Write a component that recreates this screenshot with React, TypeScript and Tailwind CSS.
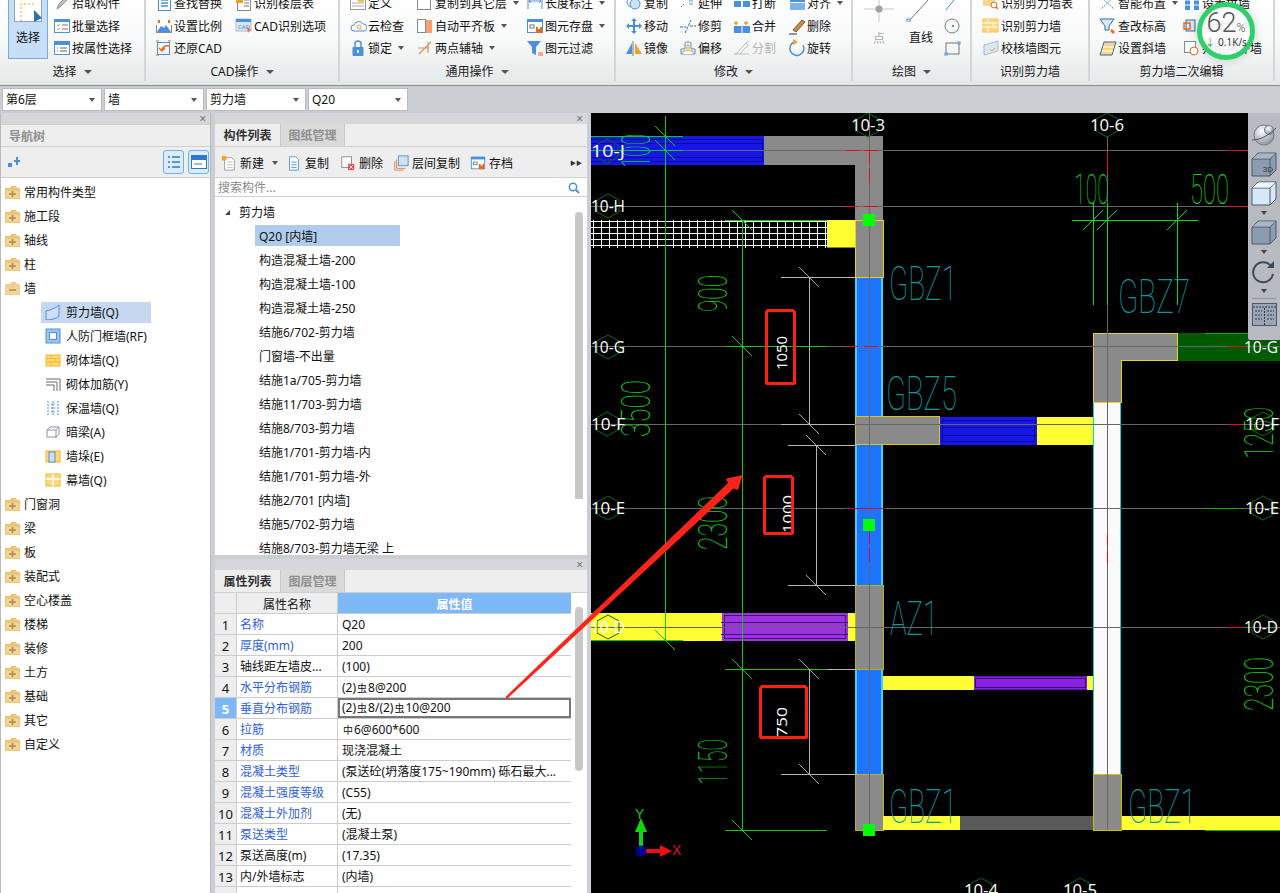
import type { ReactNode } from 'react';

const B = '#4a90dc';
const O = '#f0a030';

const icons: Record<string, ReactNode> = {
  pick: <path d="M4 15l2-5 7-7 2 2-7 7z" fill="#c9c4b8" stroke="#8a8a8a" />,
  batch: <><rect x="1.5" y="2.5" width="15" height="13" fill="#fff" stroke={B} /><rect x="1" y="2" width="16" height="3" fill={B} /><path d="M4 8l1 1 2-2M4 12l1 1 2-2" stroke={O} fill="none" /><path d="M9 8h6M9 12h6" stroke="#777" /></>,
  attr: <><rect x="1.5" y="2.5" width="15" height="13" fill="#fff" stroke={B} /><rect x="1" y="2" width="16" height="4" fill={B} /><path d="M4 9h1M4 12h1M7 9h7M7 12h7" stroke="#666" /></>,
  find: <><rect x="3.5" y="1.5" width="12" height="15" fill="#fff" stroke={B} /><path d="M6 6h7M6 9h7M6 12h7" stroke={B} strokeWidth="1.5" /></>,
  floors: <><rect x="2.5" y="1.5" width="13" height="15" fill="#fff" stroke="#888" /><rect x="1" y="1" width="7" height="8" fill={O} /><path d="M9 6h5M9 9h5M9 12h5" stroke="#777" /></>,
  scale: <><path d="M2 15l4-6 3 2 2-3 5 7z" fill={B} /><path d="M2 15.5h14M1.5 8v8M16.5 8v8" stroke="#888" /><path d="M4 3v3M14 3v3" stroke="#e86a20" strokeWidth="2" /></>,
  cad: <><rect x="1" y="2" width="15" height="12" fill="#dbe6f4" stroke="#a8bcd4" /><rect x="1" y="2" width="15" height="3" fill={B} /><text x="3" y="12" fontSize="6" fill="#5a7fb0">CAD</text><path d="M12 10l4 3-2 1-1 2z" fill="#e86a20" /></>,
  restore: <><rect x="2.5" y="3.5" width="12" height="12" fill="none" stroke={B} /><path d="M14 7c-4-1-7 1-7 5M4 9l3 3 3-3" fill="none" stroke="#e86a20" strokeWidth="1.5" /><path d="M1 2h3M1 16h3M13 2h3" stroke="#e86a20" /></>,
  define: <><rect x="1.5" y="2.5" width="15" height="13" fill="#fff" stroke="#999" /><path d="M9 5h6v3H9z" fill="#f5c050" /><path d="M3 9h12M3 12h12" stroke="#aaa" /></>,
  cloud: <><path d="M5 14a3 3 0 010-6 5 5 0 019-1 3.500 3.500 0 011 7z" fill="#fff" stroke={B} /><circle cx="10" cy="10" r="2" fill="none" stroke={O} /><path d="M11.500 11.500l2 2" stroke={O} /></>,
  lock: <><rect x="3.500" y="8" width="11" height="9" rx="1" fill={B} /><path d="M6 8V5a3 3 0 016 0v3" fill="none" stroke={B} strokeWidth="1.500" /><rect x="8" y="11" width="2" height="3" fill="#fff" /></>,
  copyLayer: <><rect x="1.500" y="2.500" width="13" height="13" fill="#fff" stroke="#888" /><path d="M2 5h12" stroke={B} strokeWidth="2" /></>,
  level: <><rect x="1.500" y="2.500" width="8" height="13" fill="#fff" stroke="#888" /><rect x="10" y="3" width="6" height="13" fill="#f5a070" /></>,
  twoPoint: <><path d="M3 15L15 3M2 9h11M12 3v11" stroke="#d8945a" strokeWidth="1.200" fill="none" /></>,
  dim: <><path d="M2 3v12M16 3v12M3 7h12M3 7l2-2M3 7l2 2M15 7l-2-2M15 7l-2 2" stroke={B} fill="none" /></>,
  store: <><rect x="1.500" y="2.500" width="15" height="13" fill="#fff" stroke={B} /><rect x="1" y="2" width="16" height="3" fill={B} /><rect x="4" y="8" width="4" height="3" fill="none" stroke="#777" /><rect x="10" y="10" width="6" height="6" fill="#e86a20" /><rect x="12" y="10" width="2" height="2" fill="#fff" /></>,
  filter: <><path d="M1 2h14l-5 6v8l-4-2V8z" fill={B} /><path d="M12 14h5M12 16h5" stroke="#e86a20" /></>,
  copyRound: <><circle cx="7" cy="8" r="5" fill="none" stroke={B} /><circle cx="10" cy="10" r="5" fill="#cfe2f6" stroke={B} /></>,
  extend: <path d="M2 5h9M11 3v8M13 3v8M2 13l3-3" stroke={B} strokeDasharray="2 1" fill="none" />,
  cut: <><rect x="1" y="7" width="7" height="6" fill={B} /><rect x="10" y="7" width="7" height="6" fill={B} /></>,
  align: <><rect x="2" y="4" width="15" height="4" fill={B} /><rect x="2" y="9" width="15" height="7" fill="#7fb2e8" /></>,
  move: <path d="M9 1l3 3H10v4h4V6l3 3-3 3v-2h-4v4h2l-3 3-3-3h2v-4H4v2L1 9l3-3v2h4V4H6z" fill={B} />,
  trim: <path d="M1 10h6M11 9h6M6 16L12 3" stroke="#2a6ab0" strokeDasharray="3 1" fill="none" />,
  merge: <><rect x="1" y="9" width="16" height="7" fill={B} /><path d="M9 9v7" stroke="#fff" /><path d="M3 4v4M1 6h4M13 4v4M11 6h4" stroke={O} strokeWidth="1.500" /></>,
  erase: <><path d="M5 13l9-10 3 2-9 10z" fill="#c98a4a" stroke="#7a5a30" /><path d="M1 17h8" stroke="#333" /></>,
  mirror: <><path d="M8 2v15" stroke="#777" /><path d="M7 4v11H1z" fill={B} /><path d="M10 4v11h7z" fill={O} /></>,
  offset: <><path d="M2 15V10h4V5a2 2 0 012-2h2a2 2 0 012 2v5h4v5z" fill="none" stroke={B} /><path d="M4 15v-3h4V6h2v6h4v3" fill="#fff" stroke={O} /></>,
  split: <><path d="M1 15h15M3 15L13 4l2 2-8 9M13 4l3-2" fill="none" stroke="#bbb" /></>,
  rotate: <><path d="M6 3a7 7 0 109 3" fill="none" stroke={B} strokeWidth="1.500" /><path d="M5 0l5 3-5 3z" fill={O} /></>,
  wallTable: <><rect x="1" y="2" width="12" height="10" fill="#f6d78e" /><circle cx="12" cy="11" r="3" fill="#fff" stroke="#e86a20" /><path d="M14 13l2 2" stroke="#e86a20" strokeWidth="1.500" /></>,
  brick: <><rect x="1" y="2" width="15" height="13" fill="#fbd67f" stroke="#f5c050" /><path d="M1 6h15M1 10h15M6 2v4M11 6v4M6 10v5" stroke="#fff" /></>,
  wallCheck: <><path d="M2 6l14-4v10L2 16z" fill="#dbe6f4" stroke="#a8bcd4" /><path d="M8 10l2 2 3-3" stroke={O} fill="none" /></>,
  smart: <path d="M2 3l13 12M15 3L2 15M5 1v5M13 1v5" stroke={B} strokeDasharray="2 1" fill="none" />,
  pillar: <><rect x="2" y="2" width="5" height="14" fill={B} /><rect x="11" y="2" width="5" height="14" fill={B} /><path d="M2 6h5M11 6h5M2 11h5M11 11h5" stroke="#fff" /></>,
  level2: <><path d="M1 2h14l-5 7v4H6V9z" fill="#dbe6f4" stroke="#2a6ab0" /><path d="M12 13l3 3" stroke="#e86a20" strokeWidth="2.500" /></>,
  slant: <><path d="M5 3h12l-4 13H1z" fill="#fbd67f" stroke="#2a6ab0" /><path d="M4 8h11M3 12h11" stroke="#fff" /></>,
  pull: <><rect x="3" y="3" width="9" height="11" fill="#dbe6f4" stroke="#2a6ab0" /><rect x="1" y="6" width="6" height="6" fill="none" stroke="#e86a20" strokeWidth="1.500" /></>,
  judge: <><rect x="1.500" y="2.500" width="11" height="11" fill="#fff" stroke="#7a90aa" /><circle cx="11" cy="12" r="4" fill="#fff" stroke="#e86a20" /></>,
  arc: <><path d="M3 16L14 2" stroke={B} /><rect x="13" y="1" width="3" height="3" fill="#fff" stroke={B} /></>,
  circle: <><circle cx="9" cy="9" r="7" fill="none" stroke="#777" /><rect x="9" y="8" width="2" height="2" fill={B} /></>,
  rect: <><rect x="3" y="4" width="13" height="11" fill="none" stroke="#777" /><rect x="2" y="14" width="2" height="2" fill="#fff" stroke={B} /><rect x="15" y="3" width="2" height="2" fill="#fff" stroke={B} /></>,
  newDoc: <><path d="M4 3h8l3 3v11H4z" fill="#fff" stroke="#999" /><path d="M7 8h6M7 11h6M7 14h6" stroke="#bbb" /><path d="M1 1h5v5H1z" fill={O} /></>,
  dup: <><path d="M4 2h7l3 3v12H4z" fill="#fff" stroke={B} /><path d="M6 8h6M6 11h6M6 14h6" stroke={B} /></>,
  del: <><rect x="2" y="2" width="11" height="12" fill="#fff" stroke="#888" /><rect x="9" y="10" width="7" height="7" fill="#e05050" /><path d="M10.500 11.500l4 4M14.500 11.500l-4 4" stroke="#fff" /></>,
  layers: <><path d="M2 7v10h10" fill="none" stroke="#e08040" /><path d="M4 5v10h10" fill="none" stroke="#e08040" /><rect x="6" y="1" width="11" height="11" fill="#cfe2f6" stroke={B} /></>,
};

const Icon = ({ name, size = 18 }: { name: string; size?: number }) => (
  <svg viewBox="0 0 18 18" width={size} height={size} className="shrink-0">{icons[name]}</svg>
);

const Caret = () => <span className="ml-[5px] h-0 w-0 border-x-[3.500px] border-t-[4px] border-x-transparent border-t-[#555]" />;

function Item({ icon, label, caret, off }: { icon: string; label: string; caret?: boolean; off?: boolean }) {
  return (
    <div className={`flex h-[22.5px] items-center gap-px whitespace-nowrap ${off ? 'text-[#b5b5b5]' : ''}`}>
      <Icon name={icon} />
      <span className="pt-[2px]">{label}</span>
      {caret && <Caret />}
    </div>
  );
}

function Group({ width, title, caret, children, last }: { width: string; title: string; caret?: boolean; children: ReactNode; last?: boolean }) {
  return (
    <div className={`flex h-[85px] shrink-0 flex-col overflow-hidden ${width}`}>
      <div className={`flex h-[81px] flex-col ${last ? '' : 'border-r-2 border-[#d3d6d6]'}`}>
        <div className="h-[60px] shrink-0 overflow-hidden">
          <div className="-mt-[8px] flex">{children}</div>
        </div>
        <div className="flex h-[25px] items-center justify-center pt-[2px] text-[#1a1a1a]">
          {title}
          {caret && <span className="ml-[7px] h-0 w-0 border-x-[4px] border-t-[4px] border-x-transparent border-t-[#555]" />}
        </div>
      </div>
    </div>
  );
}

function Ribbon() {
  return (
    <div className="relative flex h-[85px] overflow-hidden bg-gradient-to-b from-white via-[#f7f8f8] to-[#e4e8e8]">
      <Group width="w-[146px]" title="选择" caret>
        <div className="ml-[8px] flex h-[67px] w-[40px] flex-col items-center border border-[#7aa9d8] bg-[#c7def7]">
          <svg viewBox="0 0 28 30" width="28" height="30" className="shrink-0">
            <rect x="0.500" y="0.500" width="27" height="28" fill="#fff" stroke="#8ba4c0" />
            <path d="M7 28V11h14" fill="none" stroke={O} strokeDasharray="2 2" />
            <path d="M20 17l8 8-8 4z" fill="#2f6fb0" />
          </svg>
          <span className="mt-[7px]">选择</span>
        </div>
        <div className="ml-[5px]">
          <Item icon="pick" label="拾取构件" />
          <Item icon="batch" label="批量选择" />
          <Item icon="attr" label="按属性选择" />
        </div>
      </Group>
      <Group width="w-[194px]" title="CAD操作" caret>
        <div className="ml-[9px] w-[80px]">
          <Item icon="find" label="查找替换" />
          <Item icon="scale" label="设置比例" />
          <Item icon="restore" label="还原CAD" />
        </div>
        <div>
          <Item icon="floors" label="识别楼层表" />
          <Item icon="cad" label="CAD识别选项" />
        </div>
      </Group>
      <Group width="w-[276px]" title="通用操作" caret>
        <div className="ml-[9px] w-[67px]">
          <Item icon="define" label="定义" />
          <Item icon="cloud" label="云检查" />
          <Item icon="lock" label="锁定" caret />
        </div>
        <div className="w-[110px]">
          <Item icon="copyLayer" label="复制到其它层" caret />
          <Item icon="level" label="自动平齐板" caret />
          <Item icon="twoPoint" label="两点辅轴" caret />
        </div>
        <div>
          <Item icon="dim" label="长度标注" caret />
          <Item icon="store" label="图元存盘" caret />
          <Item icon="filter" label="图元过滤" />
        </div>
      </Group>
      <Group width="w-[237px]" title="修改" caret>
        <div className="ml-[9px] w-[54px]">
          <Item icon="copyRound" label="复制" />
          <Item icon="move" label="移动" />
          <Item icon="mirror" label="镜像" />
        </div>
        <div className="w-[54px]">
          <Item icon="extend" label="延伸" />
          <Item icon="trim" label="修剪" />
          <Item icon="offset" label="偏移" />
        </div>
        <div className="w-[55px]">
          <Item icon="cut" label="打断" />
          <Item icon="merge" label="合并" />
          <Item icon="split" label="分割" off />
        </div>
        <div>
          <Item icon="align" label="对齐" caret />
          <Item icon="erase" label="删除" />
          <Item icon="rotate" label="旋转" />
        </div>
      </Group>
      <Group width="w-[119px]" title="绘图" caret>
        <div className="flex h-[67px] w-[50px] flex-col items-center pl-[2px]">
          <svg viewBox="0 0 30 30" width="30" height="30" className="shrink-0">
            <path d="M15 0v30M0 17h30" stroke="#c8c8c8" />
            <circle cx="15" cy="17" r="3.500" fill="#a0a0a0" />
          </svg>
          <span className="mt-[9px] text-[#b0aca0]">点</span>
        </div>
        <div className="flex h-[67px] w-[36px] flex-col items-center">
          <svg viewBox="0 0 30 30" width="30" height="30" className="shrink-0">
            <path d="M3 29L32 -3" stroke="#777" />
            <rect x="1" y="27" width="3" height="3" fill="#fff" stroke={B} />
          </svg>
          <span className="mt-[8px]">直线</span>
        </div>
        <div className="ml-[4px] flex flex-col">
          <div className="flex h-[22.5px] items-center"><Icon name="arc" /></div>
          <div className="flex h-[22.5px] items-center"><Icon name="circle" /></div>
          <div className="flex h-[22.5px] items-center"><Icon name="rect" /></div>
        </div>
      </Group>
      <Group width="w-[118px]" title="识别剪力墙">
        <div className="ml-[10px]">
          <Item icon="wallTable" label="识别剪力墙表" />
          <Item icon="brick" label="识别剪力墙" />
          <Item icon="wallCheck" label="校核墙图元" />
        </div>
      </Group>
      <Group width="w-[185px]" title="剪力墙二次编辑">
        <div className="ml-[9px] w-[84px]">
          <Item icon="smart" label="智能布置" caret />
          <Item icon="level2" label="查改标高" />
          <Item icon="slant" label="设置斜墙" />
        </div>
        <div>
          <Item icon="pillar" label="设置拱墙" />
          <Item icon="pull" label="墙体拉通" />
          <Item icon="judge" label="判断内外墙" />
        </div>
      </Group>
      <div className="absolute left-[1197px] top-[2px] flex h-[58px] w-[58px] flex-col items-center rounded-full border-[5px] border-[#2ed06e] bg-white/90 shadow-[0_0_8px_rgba(0,0,0,0.18)]">
        <div className="mt-[4px] flex h-[24px] items-baseline font-['Roboto',sans-serif] font-light text-[#555]">
          <span className="text-[27px] leading-[24px]">62</span>
          <span className="text-[12px]">%</span>
        </div>
        <div className="mt-[2px] flex items-center gap-[3px] text-[10px] leading-[10px] text-[#333]">
          <span className="text-[#2ba84a]">↓</span>0.1K/s
        </div>
      </div>
    </div>
  );
}

function Combo({ label }: { label: string }) {
  return (
    <div className="flex h-[21px] w-[98px] items-center justify-between bg-white pl-[3px] pr-[6px] shadow-[0_0_0_1px_#b8babd]">
      <span>{label}</span>
      <span className="h-0 w-0 border-x-[3.500px] border-t-[4px] border-x-transparent border-t-[#555]" />
    </div>
  );
}

const PanelClose = () => (
  <div className="flex h-[11px] shrink-0 items-center justify-end bg-[#d5d7da] pr-[4px] text-[12px] leading-[11px] text-[#777]">×</div>
);

function Folder({ open }: { open?: boolean }) {
  return (
    <svg viewBox="0 0 15 14" width="15" height="14" className="shrink-0">
      <path d="M0 3h5l1-2h5l1 2h3v11H0z" fill={open ? '#edd092' : '#e8c578'} />
      <path d="M1 6h13v7H1z" fill="#f2d596" />
      {open ? <path d="M4 9h7" stroke="#a88a44" strokeWidth="1.500" /> : <path d="M4 9h7M7.500 6v6" stroke="#a88a44" strokeWidth="1.500" />}
    </svg>
  );
}

const navChildIcons: Record<string, ReactNode> = {
  shear: <><path d="M1 7c4-1 10-3 13-6v11c-3 3-9 4-13 4z" fill="#cfe0f6" stroke={B} /></>,
  frame: <><rect x="1" y="1" width="14" height="14" fill="#9fc2ea" stroke={B} /><rect x="4.500" y="4.500" width="7" height="7" fill="#fff" stroke={B} /></>,
  brick: <><rect x="1" y="3" width="14" height="11" fill="#fcd880" stroke="#f5b820" /><path d="M1 6.500h14M1 10h14M6 3v4M10 7v3M6 10v4" stroke="#f5b820" /></>,
  bar: <path d="M1 3h14v12M1 6h11v9M1 9h8v6" fill="none" stroke="#667" />,
  insul: <path d="M3 1v14M13 1v14M6 4h4M6 8h4M6 12h4M8 1v14" stroke={B} strokeDasharray="2 1" fill="none" />,
  beam: <><path d="M2 6l3-3h9v7l-3 3H2z" fill="#fff" stroke="#8a96a4" /><path d="M2 6h9v8M11 6l3-3" fill="none" stroke="#8a96a4" /></>,
  pier: <><rect x="1" y="3" width="14" height="11" fill="#fcd880" stroke="#f5b820" /><rect x="4" y="4" width="6" height="10" fill="#cfe0f6" stroke={B} /></>,
  curtain: <><rect x="1" y="2" width="14" height="12" fill="#fcd880" stroke="#f5b820" /><path d="M1 7h14M8 2v12" stroke="#fff" strokeWidth="1.500" /></>,
};

function NavPanel() {
  const before = ['常用构件类型', '施工段', '轴线', '柱'];
  const kids = [
    ['shear', '剪力墙(Q)'], ['frame', '人防门框墙(RF)'], ['brick', '砌体墙(Q)'], ['bar', '砌体加筋(Y)'],
    ['insul', '保温墙(Q)'], ['beam', '暗梁(A)'], ['pier', '墙垛(E)'], ['curtain', '幕墙(Q)'],
  ];
  const after = ['门窗洞', '梁', '板', '装配式', '空心楼盖', '楼梯', '装修', '土方', '基础', '其它', '自定义'];
  const Row = ({ label, open }: { label: string; open?: boolean }) => (
    <div className="flex h-6 items-center gap-[4px] pl-[4px]">
      <Folder open={open} />
      <span className="pt-[2px]">{label}</span>
    </div>
  );
  return (
    <div className="flex w-[211px] shrink-0 flex-col border-x border-[#b9bbbe] bg-white">
      <PanelClose />
      <div className="flex h-[23px] shrink-0 items-center border-y border-[#d0d0d0] bg-[#eeeeee] pl-[8px] pt-[2px] font-bold text-[#8f8f8f]">导航树</div>
      <div className="flex h-[31px] shrink-0 items-center justify-between border-b border-[#cfcfcf] bg-[#eeeeee] pl-[6px] pr-[1px]">
        <svg viewBox="0 0 13 11" width="13" height="11"><path d="M1 6h4v4H1zM7 3h2V0h2v3h2v2h-2v3H9V5H7z" fill={B} /></svg>
        <div className="flex gap-[4px]">
          <div className="flex h-6 w-[21px] items-center justify-center rounded-[3px] border border-[#6db0f5] bg-[#dcecfb]">
            <svg viewBox="0 0 14 14" width="14" height="14"><path d="M1 2h2M5 2h8M1 7h2M5 7h8M1 12h2M5 12h8" stroke="#2f79c4" strokeWidth="1.300" /></svg>
          </div>
          <div className="flex h-6 w-[21px] items-center justify-center rounded-[3px] border border-[#6db0f5] bg-[#dcecfb]">
            <svg viewBox="0 0 16 14" width="16" height="14"><rect x="0.500" y="0.500" width="15" height="13" fill="#fff" stroke="#2f79c4" /><rect x="0" y="0" width="16" height="5" fill="#2f79c4" /><path d="M3 9h8" stroke="#2f79c4" /></svg>
          </div>
        </div>
      </div>
      <div className="pt-[2px]">
        {before.map((t) => <Row key={t} label={t} />)}
        <Row label="墙" open />
        {kids.map(([ic, t], i) => (
          <div key={t} className="flex h-6 items-center pl-[40px]">
            <div className={`flex h-[21px] w-[110px] items-center gap-[5px] whitespace-nowrap pl-[4px] ${i === 0 ? 'bg-[#c6d8f0]' : ''}`}>
              <svg viewBox="0 0 16 16" width="16" height="16" className="shrink-0">{navChildIcons[ic]}</svg>
              <span className="pt-[2px]">{t}</span>
            </div>
          </div>
        ))}
        {after.map((t) => <Row key={t} label={t} />)}
      </div>
    </div>
  );
}

function Tabs({ a, b }: { a: string; b: string }) {
  return (
    <div className="flex h-[23px] shrink-0 border-b border-[#cfcfcf] bg-[#eeeeee]">
      <div className="flex w-[65px] items-center justify-center pt-[2px] font-bold text-[#333]">{a}</div>
      <div className="flex w-[65px] items-center justify-center border-x border-[#c8c8c8] bg-[#dadada] pt-[2px] font-bold text-[#8f8f8f]">{b}</div>
    </div>
  );
}

function ComponentList() {
  const rows = [
    '构造混凝土墙-200', '构造混凝土墙-100', '构造混凝土墙-250', '结施6/702-剪力墙', '门窗墙-不出量', '结施1a/705-剪力墙',
    '结施11/703-剪力墙', '结施8/703-剪力墙', '结施1/701-剪力墙-内', '结施1/701-剪力墙-外', '结施2/701 [内墙]',
    '结施5/702-剪力墙', '结施8/703-剪力墙无梁 上',
  ];
  const tools: [string, string, string][] = [
    ['newDoc', '新建', 'ml-[6px]'], ['dup', '复制', 'ml-[8px]'], ['del', '删除', 'ml-[11px]'], ['layers', '层间复制', 'ml-[10px]'], ['store', '存档', 'ml-[10px]'],
  ];
  return (
    <div className="flex h-[442px] shrink-0 flex-col bg-white">
      <PanelClose />
      <Tabs a="构件列表" b="图纸管理" />
      <div className="flex h-[31px] shrink-0 items-center border-b border-[#cfcfcf] bg-[#eeeeee] pr-[5px] pt-[1px]">
        {tools.map(([ic, t, m], i) => (
          <div key={t} className={`flex items-center gap-[3px] ${m}`}>
            <Icon name={ic} size={16} />
            <span className="pt-[2px]">{t}</span>
            {i === 0 && <Caret />}
          </div>
        ))}
        <span className="ml-auto text-[6px] text-[#333]">▶▶</span>
      </div>
      <div className="flex h-[19px] shrink-0 items-center justify-between border-b border-[#cfcfcf] pl-[3px] pr-[7px] pt-[2px] text-[#8a8a8a]">
        搜索构件...
        <svg viewBox="0 0 12 12" width="12" height="12"><circle cx="5" cy="5" r="3.700" fill="none" stroke={B} strokeWidth="1.500" /><path d="M8 8l3 3" stroke={B} strokeWidth="2" /></svg>
      </div>
      <div className="relative min-h-0 flex-1 overflow-hidden">
        <div className="flex h-6 items-center pl-[10px] pt-[6px]">
          <span className="h-0 w-0 border-b-[5px] border-l-[5px] border-b-[#444] border-l-transparent" />
          <span className="ml-[9px] pt-[2px]">剪力墙</span>
        </div>
        <div className="ml-[40px] mt-[4px] flex h-[21px] w-[145px] items-center bg-[#b0cced] pl-[4px] pt-[2px]">Q20 [内墙]</div>
        <div className="pl-[44px] pt-[2px]">
          {rows.map((t) => <div key={t} className="flex h-6 items-center whitespace-nowrap pt-[2px]">{t}</div>)}
        </div>
        <div className="absolute left-[360px] top-[15px] h-[287px] w-2 rounded-t-[4px] bg-[#c8c8c8]" />
      </div>
    </div>
  );
}

const Rebar = ({ c }: { c: string }) => <span className="mx-[1px] align-[3px] text-[10px] leading-none">{c}</span>;

function PropertyList() {
  const rows: [string, boolean, ReactNode][] = [
    ['名称', true, 'Q20'],
    ['厚度(mm)', true, '200'],
    ['轴线距左墙皮...', false, '(100)'],
    ['水平分布钢筋', true, <>(2)<Rebar c="虫" />8@200</>],
    ['垂直分布钢筋', true, <>(2)<Rebar c="虫" />8/(2)<Rebar c="虫" />10@200</>],
    ['拉筋', true, <><Rebar c="中" />6@600*600</>],
    ['材质', true, '现浇混凝土'],
    ['混凝土类型', true, '(泵送砼(坍落度175~190mm) 砾石最大...'],
    ['混凝土强度等级', true, '(C55)'],
    ['混凝土外加剂', true, '(无)'],
    ['泵送类型', true, '(混凝土泵)'],
    ['泵送高度(m)', false, '(17.35)'],
    ['内/外墙标志', false, '(内墙)'],
    ['', false, ''],
  ];
  return (
    <div className="mt-1 flex min-h-0 flex-1 flex-col overflow-hidden bg-white">
      <PanelClose />
      <Tabs a="属性列表" b="图层管理" />
      <div className="relative flex-1">
        <div className="w-[356px]">
          <div className="flex h-[21px] border-b border-[#cccccc]">
            <div className="w-[22px] border-r border-[#cccccc] bg-[#eeeeee]" />
            <div className="flex w-[101px] items-center justify-center border-r border-[#cccccc] bg-[#eeeeee] pt-[3px]">属性名称</div>
            <div className="flex flex-1 items-center justify-center bg-[#7db8f8] pt-[3px] font-bold text-white">属性值</div>
          </div>
          {rows.map(([name, blue, value], i) => (
            <div key={i} className="flex h-[21px] border-b border-[#cccccc]">
              <div className={`flex w-[22px] items-center justify-center border-r border-[#cccccc] pt-[1px] text-[13px] ${i === 4 ? 'bg-[#7db8f8] font-bold text-white' : 'bg-[#eeeeee]'}`}>{i < 13 ? i + 1 : ''}</div>
              <div className={`flex w-[101px] items-center whitespace-nowrap border-r border-[#cccccc] pl-[3px] pt-[2px] ${blue ? 'text-[#2f5fd6]' : ''}`}>{name}</div>
              <div className={`flex flex-1 items-center whitespace-nowrap ${i === 4 ? 'border-2 border-[#777777] pl-[2px]' : 'pl-[4px] pt-[2px]'}`}>{value}</div>
            </div>
          ))}
        </div>
        <div className="absolute left-[360px] top-[14px] h-[164px] w-2 rounded-[4px] bg-[#c8c8c8]" />
      </div>
    </div>
  );
}

const hexPts = (x: number, y: number) => `${x},${y - 12} ${x + 11},${y - 6} ${x + 11},${y + 6} ${x},${y + 12} ${x - 11},${y + 6} ${x - 11},${y - 6}`;

function Label({ t, x, y, hx }: { t: string; x: number; y: number; hx: number }) {
  return (
    <g>
      <polygon points={hexPts(hx, y)} fill="none" stroke="#0c6a0c" />
      <text x={x} y={y + 6} fontSize="17" fill="#ffffff" fontFamily="'Open Sans',sans-serif" textLength="34" lengthAdjust="spacingAndGlyphs">{t}</text>
    </g>
  );
}

function CadText({ t, x, y, w, size, fill }: { t: string; x: number; y: number; w: number; size: number; fill: string }) {
  return <text x={x} y={y} fontSize={size} fill={fill} fontFamily="Roboto,sans-serif" fontWeight="100" textLength={w} lengthAdjust="spacingAndGlyphs">{t}</text>;
}

function DimText({ t, x, y, w }: { t: string; x: number; y: number; w: number }) {
  return (
    <text transform={`translate(${x} ${y}) rotate(-90)`} fontSize="41" fill="#14d014" fontFamily="Roboto,sans-serif" fontWeight="100" textLength={w} lengthAdjust="spacingAndGlyphs">{t}</text>
  );
}

const tick = (x: number, y: number, c: string) => <path key={`${x}-${y}`} d={`M${x - 10} ${y - 10}L${x + 10} ${y + 10}`} stroke={c} />;

function Drawing() {
  const grids = [150, 206, 346, 424, 508, 627];
  const col = 'none';
  return (
    <svg viewBox="591 113 689 780" width="689" height="780" className="block bg-black" shapeRendering="crispEdges">
      <defs>
        <pattern id="hatch" x="591" y="221" width="8" height="6" patternUnits="userSpaceOnUse">
          <path d="M2.500 0v6M0 0.500h8" stroke="#fff" fill="none" />
        </pattern>
      </defs>

      {/* walls */}
      <rect x="591" y="136" width="173" height="29" fill="#1616e6" />
      <path d="M591 139.500h171v22H591M591 143.500h171M591 150.500h171M591 157.500h171" stroke="#0a0a9c" fill="none" />
      <path d="M764 136h119v84h-28v-55h-91z" fill="#8a8a8a" />
      <rect x="591" y="220" width="236" height="28" fill="url(#hatch)" />
      <rect x="827" y="220" width="28" height="28" fill="#ffff33" />
      <path d="M827 247.500h28" stroke="#8a8a00" />
      <rect x="855" y="277" width="28" height="308" fill="#1f74ff" />
      <path d="M856 277v308M882 277v308" stroke="#3fd0ff" strokeWidth="2" />
      <rect x="855.500" y="220.500" width="28" height="57" fill="#8a8a8a" stroke="#e6d320" />
      <rect x="855.500" y="416.500" width="84" height="28" fill="#8a8a8a" stroke="#d6c820" />
      <rect x="940" y="417" width="97" height="28" fill="#1616e6" />
      <path d="M942 420.500h92v21h-92zM942 427.500h95M942 435.500h95" stroke="#0a0a9c" fill="none" />
      <rect x="1037" y="417" width="56" height="28" fill="#ffff33" />
      <rect x="1093" y="402" width="28" height="372" fill="#fafafa" />
      <path d="M1093.500 402v372M1120.500 402v372" stroke="#00d8d8" />
      <path d="M1093.500 333.500h84v27h-56v42h-28z" fill="#8a8a8a" stroke="#e6d320" />
      <rect x="1178" y="333" width="102" height="28" fill="#005a00" />
      <rect x="591" y="613" width="264" height="28" fill="#ffff33" />
      <rect x="722" y="613" width="126" height="28" fill="#9a33e0" />
      <path d="M724.500 615.500h121v23h-121zM721 622.500h128v12H721" stroke="#44106e" fill="none" />
      <rect x="848" y="613" width="7" height="28" fill="#ffff33" />
      <rect x="855" y="669" width="28" height="105" fill="#1f74ff" />
      <path d="M856 669v105M882 669v105" stroke="#3fd0ff" strokeWidth="2" />
      <rect x="855.500" y="585.500" width="28" height="84" fill="#8a8a8a" stroke="#b4b428" />
      <rect x="855.500" y="774.500" width="28" height="56" fill="#8a8a8a" stroke="#b4b428" />
      <rect x="883" y="676" width="210" height="14" fill="#ffff33" />
      <rect x="974" y="676" width="113" height="14" fill="#8a22e6" />
      <path d="M974 676.500h113M974 689.500h113" stroke="#5a10a0" />
      <rect x="975.500" y="678.500" width="110" height="9" fill="none" stroke="#3d0a70" />
      <rect x="883" y="816" width="77" height="14" fill="#ffff33" />
      <rect x="960" y="816" width="133" height="14" fill="#595959" />
      <rect x="1121" y="816" width="159" height="14" fill="#ffff33" />
      <rect x="1093.500" y="774.500" width="28" height="56" fill="#8a8a8a" stroke="#c4c400" />

      {/* grid lines */}
      {grids.map((y) => <path key={y} d={`M591 ${y + 0.5}H1280`} stroke="#666" />)}
      <path d="M869.500 113v717M1107.500 137v693" stroke="#666" />

      {/* red axis marks */}
      <path d="M846 150.500h14M864 150.500h14M846 206.500h12M864 206.500h14M846 346.500h12M864 346.500h14M1228 150.500h19M1228 206.500h19M1228 346.500h19M1228 424.500h14M1228 627.500h14" stroke="#e01010" />
      <path d="M869.500 150v14M869.500 168v15M1107.500 152v22M1107.500 534v13M1107.500 551v13" stroke="#e01010" />
      <path d="M846 508.500h40M869.500 530v14M869.500 548v14" stroke="#c01040" />

      {/* green dimensions */}
      <path d="M665.500 116V640M742.500 220V830M591 136.500h92M591 150.500h92M591 640.500h92M725 220.500h102M725 346.500h102M725 669.500h102M725 830.500h102" stroke="#10c810" fill={col} />
      {[[665, 136], [665, 150], [665, 640], [742, 220], [742, 346], [742, 669], [742, 830]].map(([x, y]) => tick(x, y, '#10c810'))}
      <path d="M1093.500 203v102M1107.500 203v102M1177.500 203v102M1072 220.500h126" stroke="#16d816" />
      <path d="M1083 230l20-20M1097 230l20-20M1167 230l20-20" stroke="#16d816" />
      <path d="M1205 333.500h43M1205 508.500h38M1205 830.500h75" stroke="#10b010" />

      {/* grey dimensions */}
      <path d="M809.500 277v147M781 277.500h74M781 424.500h74M816.500 445v140M788 445.500h67M788 585.500h67M809.500 669v105M827 669.500h28M781 774.500h74" stroke="#b5b5b5" />
      {[[809, 277], [809, 424], [816, 445], [816, 585], [809, 669], [809, 774]].map(([x, y]) => tick(x, y, '#a8a8a8'))}

      {/* texts */}
      <g shapeRendering="auto">
        <CadText t="GBZ1" x={889} y={300} w={68} size={48} fill="#0c9aa0" />
        <CadText t="GBZ7" x={1118} y={313} w={72} size={48} fill="#0c9aa0" />
        <CadText t="GBZ5" x={886} y={410} w={71} size={48} fill="#0c9aa0" />
        <CadText t="AZ1" x={890} y={635} w={48} size={48} fill="#0c9aa0" />
        <CadText t="GBZ1" x={889} y={823} w={68} size={48} fill="#0c9aa0" />
        <CadText t="GBZ1" x={1128} y={823} w={68} size={48} fill="#0c9aa0" />
        <CadText t="100" x={1074} y={204} w={35} size={42} fill="#12d012" />
        <CadText t="500" x={1190} y={204} w={39} size={42} fill="#12d012" />
        <DimText t="100" x={650} y={168} w={34} />
        <DimText t="900" x={727} y={312} w={37} />
        <DimText t="3500" x={650} y={437} w={57} />
        <DimText t="2300" x={727} y={550} w={54} />
        <DimText t="1150" x={727} y={785} w={46} />
        <DimText t="1250" x={1273} y={459} w={52} />
        <DimText t="2300" x={1273} y={711} w={54} />

        <Label t="10-3" x={851} y={125} hx={868} />
        <Label t="10-6" x={1090} y={125} hx={1107} />
        <Label t="10-J" x={591} y={151} hx={607} />
        <Label t="10-H" x={591} y={206} hx={608} />
        <Label t="10-G" x={591} y={347} hx={608} />
        <Label t="10-F" x={591} y={424} hx={607} />
        <Label t="10-E" x={591} y={508} hx={608} />
        <Label t="10-D" x={591} y={627} hx={608} />
        <Label t="10-G" x={1244} y={347} hx={1263} />
        <Label t="10-F" x={1245} y={424} hx={1263} />
        <Label t="10-E" x={1245} y={508} hx={1263} />
        <Label t="10-D" x={1244} y={627} hx={1263} />
        <Label t="10-4" x={964} y={890} hx={981} />
        <Label t="10-5" x={1063} y={890} hx={1080} />

        <text transform="translate(787 370) rotate(-90)" fontSize="15" fill="#fff" fontFamily="'Open Sans',sans-serif" textLength="34" lengthAdjust="spacingAndGlyphs">1050</text>
        <text transform="translate(793 533) rotate(-90)" fontSize="15" fill="#fff" fontFamily="'Open Sans',sans-serif" textLength="38" lengthAdjust="spacingAndGlyphs">1000</text>
        <text transform="translate(787 737) rotate(-90)" fontSize="15" fill="#fff" fontFamily="'Open Sans',sans-serif" textLength="30" lengthAdjust="spacingAndGlyphs">750</text>

        <text x="672" y="855" fontSize="14" fill="#e81010" fontFamily="'Liberation Sans',sans-serif">X</text>
        <text x="635" y="819" fontSize="14" fill="#10c810" fontFamily="'Liberation Sans',sans-serif">Y</text>
      </g>

      {/* annotations */}
      <rect x="766.500" y="310.500" width="28" height="73" rx="2" fill="none" stroke="#ff2010" strokeWidth="3" />
      <rect x="764.500" y="476.500" width="28" height="57" rx="2" fill="none" stroke="#ff2010" strokeWidth="3" />
      <rect x="760.500" y="686.500" width="46" height="51" rx="2" fill="none" stroke="#ff2010" strokeWidth="3" />

      {/* handles */}
      <rect x="863" y="214" width="12" height="12" fill="#00ff00" />
      <rect x="863" y="519" width="12" height="12" fill="#00ff00" />
      <rect x="863" y="824" width="12" height="12" fill="#00ff00" />

      {/* axis */}
      <g shapeRendering="auto">
        <path d="M639 852v-20h-4l6-14 6 14h-4v20z" fill="#10d810" />
        <path d="M642 849h18v-4l12 6-12 6v-4h-18z" fill="#f01010" />
        <circle cx="641" cy="851" r="5.500" fill="#000098" />
      </g>
    </svg>
  );
}

function ViewTools() {
  const cube = (face: string, top: string) => (
    <svg viewBox="0 0 26 26" width="26" height="26">
      <path d="M1 8l6-6h18v17l-6 6H1z" fill={face} stroke="#4c5866" />
      <path d="M1 8h18v17M19 8l6-6" fill="none" stroke="#4c5866" />
      <path d="M1.500 7.500l6-5h17l-5.500 5z" fill={top} />
    </svg>
  );
  const arrow = <span className="h-0 w-0 border-x-[3.500px] border-t-[4px] border-x-transparent border-t-[#444]" />;
  return (
    <div className="absolute right-0 top-0 flex h-[227px] w-[32px] flex-col items-center rounded-bl-[2px] bg-[#b7bbc1] pt-[10px]">
      <svg viewBox="0 0 26 24" width="26" height="24">
        <defs>
          <radialGradient id="ball" cx="0.400" cy="0.300" r="0.800">
            <stop offset="0" stopColor="#ffffff" />
            <stop offset="1" stopColor="#7f8a98" />
          </radialGradient>
        </defs>
        <circle cx="13" cy="12" r="10" fill="url(#ball)" stroke="#778" />
        <circle cx="18" cy="7" r="4.500" fill="url(#ball)" stroke="#778" />
        <path d="M1 17c8 0 16-4 24-12" fill="none" stroke="#556" />
      </svg>
      <div className="mt-[4px] flex flex-col items-center">
        <div className="relative">
          {cube('#8d9bb0', '#a9b5c5')}
          <span className="absolute bottom-[2px] right-[4px] font-['Liberation_Sans',sans-serif] text-[8px] leading-[10px] text-[#2f3a48]">3D</span>
        </div>
        <div className="mt-[3px]">{cube('#d7e8fb', '#eef5fd')}</div>
        <div className="mb-[4px] mt-[5px] flex">{arrow}</div>
        <div>{cube('#8d9bb0', '#a9b5c5')}</div>
        <div className="mb-[6px] mt-[5px] flex">{arrow}</div>
        <svg viewBox="0 0 24 24" width="24" height="24">
          <path d="M19 6a10 10 0 102 8" fill="none" stroke="#3e4a58" strokeWidth="2" />
          <path d="M15 8h7V1z" fill="#3e4a58" />
        </svg>
        <div className="mb-[5px] mt-[5px] flex">{arrow}</div>
        <div className="h-px w-[24px] bg-[#8f949a]" />
        <svg viewBox="0 0 25 23" width="25" height="23" className="mt-[4px]">
          <rect x="0.500" y="0.500" width="24" height="22" fill="#9aa6b6" stroke="#4c5866" />
          <path d="M1 4h23M12.500 5v17M3 8h7M3 12h7M3 16h7M15 8h7M15 12h7M15 16h7" stroke="#2f3a48" strokeDasharray="2 1" />
        </svg>
      </div>
    </div>
  );
}

export default function App() {
  return (
    <div className="relative h-[893px] w-[1280px] overflow-hidden bg-[#cbced2] font-['Noto_Sans','Noto_Sans_CJK_SC',sans-serif] text-[12px] leading-[16px] text-[#111]">
      <Ribbon />
      <div className="h-px bg-[#8a8c8e]" />
      <div className="flex h-[27px] items-start gap-[4px] pl-[3px] pt-[3px]">
        <Combo label="第6层" />
        <Combo label="墙" />
        <Combo label="剪力墙" />
        <Combo label="Q20" />
      </div>
      <div className="flex h-[780px]">
        <NavPanel />
        <div className="ml-[4px] flex w-[372px] shrink-0 flex-col">
          <ComponentList />
          <PropertyList />
        </div>
        <div className="relative ml-[4px] flex-1">
          <Drawing />
          <ViewTools />
        </div>
      </div>
      <svg viewBox="0 0 1280 893" width="1280" height="893" className="pointer-events-none absolute left-0 top-0">
        <polygon points="742.500,475 738,490 733.500,488.500 507,699 505.500,697 728,483 726,478.700" fill="#ff2418" />
      </svg>
    </div>
  );
}
